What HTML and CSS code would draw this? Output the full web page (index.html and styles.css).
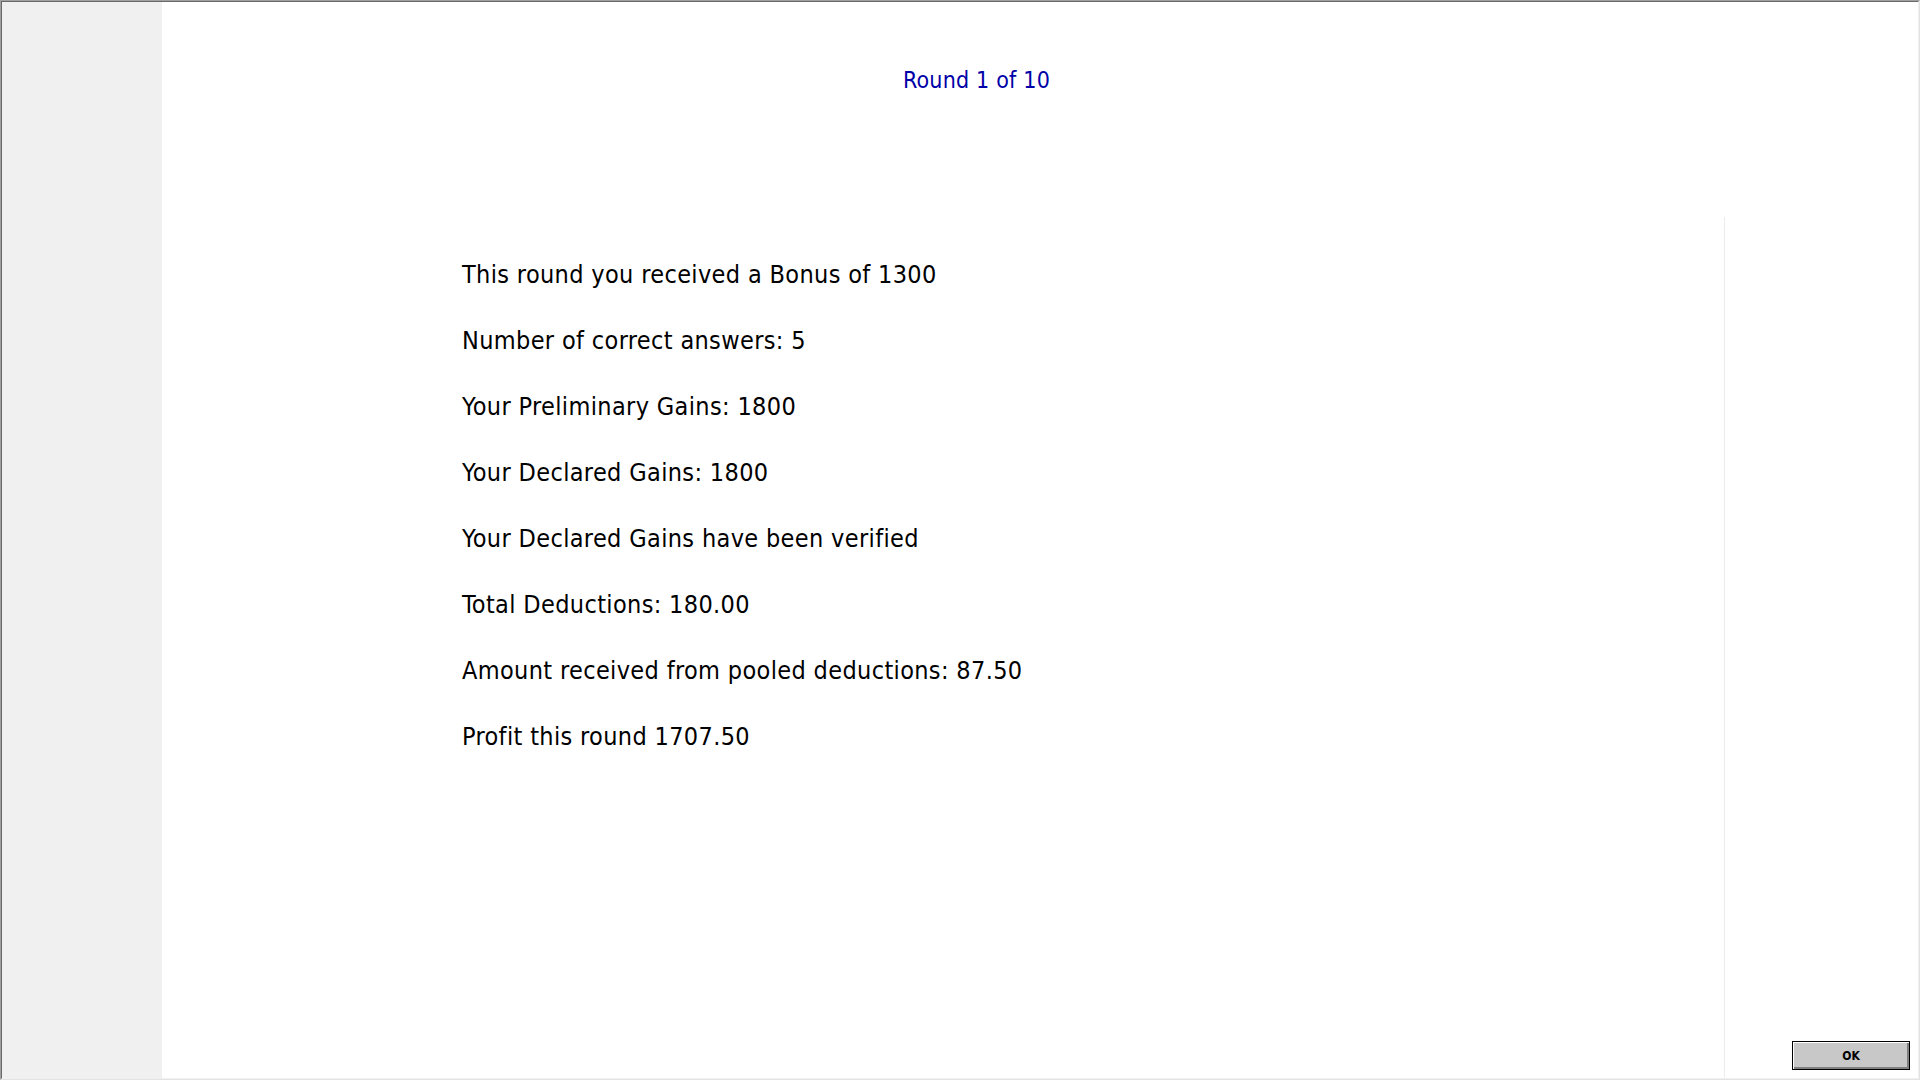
FILE: index.html
```html
<!DOCTYPE html>
<html lang="en">
<head>
<meta charset="utf-8">
<title>Round 1 of 10</title>
<link rel="stylesheet" href="styles.css">
</head>
<body>
<div class="frame">
  <div class="window">
    <aside class="sidebar"></aside>
    <main class="main">
      <header class="header">
        <h1 class="round">Round 1 of 10</h1>
      </header>
      <div class="body">
        <section class="panel">
          <p class="line">This round you received a Bonus of 1300</p>
          <p class="line">Number of correct answers: 5</p>
          <p class="line">Your Preliminary Gains: 1800</p>
          <p class="line">Your Declared Gains: 1800</p>
          <p class="line">Your Declared Gains have been verified</p>
          <p class="line">Total Deductions: 180.00</p>
          <p class="line">Amount received from pooled deductions: 87.50</p>
          <p class="line">Profit this round 1707.50</p>
        </section>
        <div class="actions">
          <button class="ok" type="button">OK</button>
        </div>
      </div>
    </main>
  </div>
</div>
</body>
</html>
```

FILE: styles.css
```css
html, body {
  margin: 0;
  padding: 0;
  background: #ffffff;
}

.frame {
  box-sizing: border-box;
  width: 1920px;
  height: 1080px;
  border-style: solid;
  border-width: 1px;
  border-color: #a0a0a0 #e3e3e3 #e3e3e3 #a0a0a0;
}

.window {
  box-sizing: border-box;
  height: 100%;
  display: flex;
  border-style: solid;
  border-width: 1px;
  border-color: #696969 #f0f0f0 #f0f0f0 #696969;
  background: #ffffff;
}

.sidebar {
  flex: 0 0 160px;
  background: #f0f0f0;
}

.main {
  flex: 1;
  display: flex;
  flex-direction: column;
  font-family: "DejaVu Sans Condensed", "DejaVu Sans", sans-serif;
  color: #000000;
}

.header {
  height: 215px;
  flex: 0 0 215px;
  padding-right: 127px;
  text-align: center;
}

.round {
  margin: 0;
  padding-top: 65px;
  font-size: 23px;
  font-weight: normal;
  line-height: 26px;
  letter-spacing: 0.2px;
  color: #0000a8;
}

.body {
  flex: 1;
  display: flex;
  min-height: 0;
}

.panel {
  flex: 0 0 1563px;
  box-sizing: border-box;
  border-right: 1px solid #ececec;
  padding: 25px 0 0 300px;
}

.line {
  margin: 0;
  font-size: 25px;
  line-height: 66px;
  letter-spacing: 0.35px;
}

.actions {
  flex: 1;
  display: flex;
  align-items: flex-end;
  justify-content: flex-end;
  padding: 0 8px 8px 0;
}

.ok {
  box-sizing: border-box;
  width: 118px;
  height: 29px;
  margin: 0;
  padding: 0;
  border: 1px solid #000000;
  box-shadow: inset 1px 1px 0 #ffffff, inset -2px -2px 0 #808080;
  background: #c8c8c8;
  font-family: "DejaVu Sans Condensed", "DejaVu Sans", sans-serif;
  font-weight: bold;
  font-size: 12px;
  color: #000000;
}
```
